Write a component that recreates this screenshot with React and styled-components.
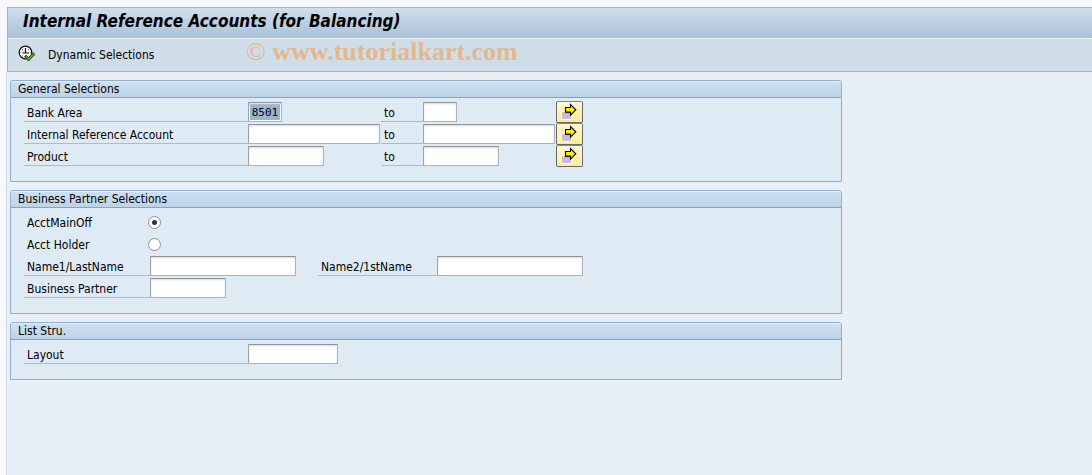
import React from "react";
import styled, { createGlobalStyle } from "styled-components";

const GlobalStyle = createGlobalStyle`
  *, *::before, *::after { box-sizing: border-box; }
  body {
    margin: 0;
    background: #f6f8fc;
    color: #000;
    font: 12px/16px "DejaVu Sans Condensed", "Noto Sans", sans-serif;
  }
`;

const Page = styled.div`
  display: flex;
  flex-direction: column;
  min-height: 100vh;
  padding: 7px 0 0 6px;
`;

const Header = styled.header`
  margin-left: 1px;
  border: solid #9fb4cb;
  border-width: 1px 0 1px 1px;
`;

const TitleBar = styled.div`
  display: flex;
  align-items: center;
  height: 30px;
  padding: 0 15px 4px;
  background: linear-gradient(#d0dfed, #a9c1d9);
`;

const Title = styled.h1`
  margin: 0;
  font: italic bold 17px/24px "DejaVu Sans Condensed", "Noto Sans", sans-serif;
  white-space: nowrap;
`;

const Toolbar = styled.div`
  display: flex;
  align-items: center;
  height: 33px;
  padding-left: 10px;
  border-top: 1px solid #eef3f8;
  background: #cfdde8;
`;

const ToolButton = styled.button`
  display: flex;
  align-items: center;
  padding: 0;
  border: 0;
  background: none;
  color: inherit;
  font: inherit;
  white-space: nowrap;
`;

const DynamicButton = styled(ToolButton)`
  width: 198px;
  margin-left: 12px;
`;

const Watermark = styled.span`
  padding-bottom: 6px;
  color: #e3b88c;
  font: bold 26px/24px "Liberation Serif", serif;
  white-space: nowrap;
`;

const Copyright = styled.span`
  font-weight: normal;
`;

const Content = styled.main`
  display: flex;
  flex: 1;
  flex-direction: column;
  gap: 8px;
  padding: 8px 3px;
  border-left: 1px solid #d3deea;
  background: #e8eff6;
`;

const Panel = styled.section`
  width: 100%;
  max-width: 832px;
  border: 1px solid #8fafcf;
  border-radius: 3px 3px 0 0;
  background: #deeaf4;
`;

const PanelTitle = styled.h2`
  height: 17px;
  margin: 0;
  padding-left: 7px;
  border-top: 1px solid #e6f0f9;
  border-bottom: 1px solid #84a3c6;
  border-radius: 2px 2px 0 0;
  background: linear-gradient(#cddff0, #bdd3e8);
  font: inherit;
  line-height: 15px;
`;

const PanelBody = styled.div`
  padding: 3px 13px 14px;
`;

const Row = styled.div`
  display: grid;
  grid-template-columns: ${(p) => p.$columns};
  align-items: center;
  height: 22px;
`;

const Label = styled.label`
  height: 20px;
  padding: 3px 3px 0;
  border-bottom: 1px solid ${(p) => (p.$plain ? "transparent" : "#b3b9be")};
  white-space: nowrap;
`;

const Field = styled.input`
  width: ${(p) => p.$width}px;
  height: 20px;
  padding: 1px;
  border: 1px solid #b0b3b6;
  border-top-color: #929598;
  border-left-color: #a0a3a6;
  border-radius: 1px;
  outline: 0;
  background: #fff;
  box-shadow: inset 0 1px 2px #d8d8dc;
  color: #000;
  font: 11px/16px "DejaVu Sans Mono", monospace;
`;

const SelectedField = styled(Field)`
  background: linear-gradient(#9ab4d3, #9ab4d3) content-box, #fff;
  text-align: center;
`;

const Radio = styled.input`
  appearance: none;
  width: 13px;
  height: 13px;
  margin: 0;
  border: 1px solid #8c9094;
  border-radius: 50%;
  background: #fff;
  &:checked {
    background: radial-gradient(circle, #2b2f45 0 2px, #fff 3px);
  }
`;

const MoreButton = styled.button`
  display: grid;
  place-items: center;
  width: 27px;
  height: 22px;
  padding: 0;
  border: 1px solid #66696c;
  border-top-color: #85888b;
  border-radius: 2px;
  background: linear-gradient(#fff8d4, #fdeb98);
`;

function ClockIcon() {
  return (
    <svg width="18" height="20" viewBox="0 0 18 20" aria-hidden="true">
      <circle cx="7.5" cy="7.5" r="6.3" fill="#fff" stroke="#111" strokeWidth="1.2" />
      <path d="M7.5 3v5.5M4.5 8h6.500" fill="none" stroke="#111" strokeWidth="1.2" />
      <path d="M2.500 7.500h1M12 7.500h1M4 4.500h1M10 4.500h1M4 11h1" stroke="#777" />
      <path d="M6.500 11.500 8 10.300l2.500 2.300 4.800-4.800 1.600 1.500-6.400 6.700z" fill="#4fae20" stroke="#174a0a" />
    </svg>
  );
}

function ArrowIcon() {
  return (
    <svg width="17" height="18" viewBox="0 0 17 18" aria-hidden="true">
      <path d="M0 8h11v9H0z" fill="#fff" />
      <path d="M1 9h9v7H1z" fill="#cfbadc" />
      <path d="M5 9h5v2H5z" fill="#9fb2df" />
      <path d="M4.500 4.500h5v-3l5.300 5.300-5.300 5.300v-3h-5z" fill="#ffee00" stroke="#000" strokeWidth="1.1" />
    </svg>
  );
}

const RANGE = "224px 133px 42px 133px 27px";

const ranges = [
  { id: "bank", label: "Bank Area", width: 34, value: "8501" },
  { id: "account", label: "Internal Reference Account", width: 132 },
  { id: "product", label: "Product", width: 76 },
];

function RangeRow({ id, label, width, value }) {
  const From = value ? SelectedField : Field;
  return (
    <Row $columns={RANGE}>
      <Label htmlFor={`${id}-from`}>{label}</Label>
      <From id={`${id}-from`} $width={width} defaultValue={value} />
      <Label htmlFor={`${id}-to`}>to</Label>
      <Field id={`${id}-to`} $width={width} />
      <MoreButton type="button" aria-label={`Multiple selection: ${label}`}>
        <ArrowIcon />
      </MoreButton>
    </Row>
  );
}

export default function App() {
  return (
    <>
      <GlobalStyle />
      <Page>
        <Header>
          <TitleBar>
            <Title>Internal Reference Accounts (for Balancing)</Title>
          </TitleBar>
          <Toolbar>
            <ToolButton type="button" aria-label="Execute">
              <ClockIcon />
            </ToolButton>
            <DynamicButton type="button">Dynamic Selections</DynamicButton>
            <Watermark>
              <Copyright>©</Copyright> www.tutorialkart.com
            </Watermark>
          </Toolbar>
        </Header>
        <Content>
          <Panel>
            <PanelTitle>General Selections</PanelTitle>
            <PanelBody>
              {ranges.map((r) => (
                <RangeRow key={r.id} {...r} />
              ))}
            </PanelBody>
          </Panel>
          <Panel>
            <PanelTitle>Business Partner Selections</PanelTitle>
            <PanelBody>
              <Row $columns="124px auto 1fr">
                <Label $plain htmlFor="main-off">AcctMainOff</Label>
                <Radio type="radio" name="role" id="main-off" defaultChecked />
              </Row>
              <Row $columns="124px auto 1fr">
                <Label $plain htmlFor="holder">Acct Holder</Label>
                <Radio type="radio" name="role" id="holder" />
              </Row>
              <Row $columns="126px 168px 119px 146px">
                <Label htmlFor="name1">Name1/LastName</Label>
                <Field id="name1" $width={146} />
                <Label htmlFor="name2">Name2/1stName</Label>
                <Field id="name2" $width={146} />
              </Row>
              <Row $columns="126px 168px">
                <Label htmlFor="partner">Business Partner</Label>
                <Field id="partner" $width={76} />
              </Row>
            </PanelBody>
          </Panel>
          <Panel>
            <PanelTitle>List Stru.</PanelTitle>
            <PanelBody>
              <Row $columns="224px 133px">
                <Label htmlFor="layout">Layout</Label>
                <Field id="layout" $width={90} />
              </Row>
            </PanelBody>
          </Panel>
        </Content>
      </Page>
    </>
  );
}
